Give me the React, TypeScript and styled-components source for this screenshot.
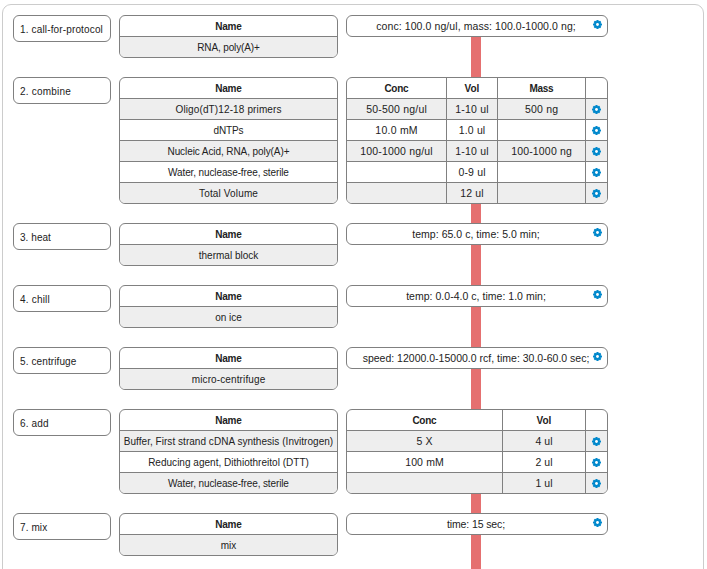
import React from "react";
import styled, { createGlobalStyle } from "styled-components";

const GlobalStyle = createGlobalStyle`
  *, *::before, *::after { box-sizing: border-box; }
  html, body { margin: 0; background: #fff; overflow: hidden; }
  body { font: 10px/20px "Liberation Sans", Arial, sans-serif; color: #222; }
`;

const Page = styled.div`
  height: 569px;
  padding: 4px 3px 0 2px;
  overflow: hidden;
`;

const Panel = styled.main`
  height: 620px;
  padding: 10px 0 0 10px;
  border: 1px solid #ccc;
  border-radius: 9px;
`;

const StepRow = styled.section`
  display: grid;
  grid-template-columns: 98px 219px 262px;
  column-gap: 8px;
  align-items: start;
`;

const Box = styled.div`
  border: 1px solid #808080;
  border-radius: 6px;
  background: #fff;
  overflow: hidden;
`;

const StepLabel = styled(Box)`
  height: 27px;
  padding: 4px 0 0 6px;
  white-space: nowrap;
`;

const NameTable = styled(Box)`
  margin-bottom: 19px;
`;

const Details = styled.div`
  display: flex;
  flex-direction: column;
  align-self: stretch;
`;

const Connector = styled.div`
  flex: 1;
  width: 10px;
  margin-left: 125px;
  background: #e57070;
`;

const Row = styled.div<{ $cols?: string }>`
  display: grid;
  grid-template-columns: ${(p) => p.$cols ?? "1fr"};
  height: 21px;
  border-bottom: 1px solid #808080;
  &:nth-child(even) { background: #eee; }
  &:first-child { font-weight: bold; }
  &:last-child { height: 20px; border-bottom: 0; }
`;

const Cell = styled.div`
  display: flex;
  justify-content: center;
  padding-top: 1px;
  line-height: 20px;
  white-space: nowrap;
  border-right: 1px solid #808080;
  &:last-child { border-right: 0; }
`;

const GearCell = styled(Cell)`
  align-items: center;
  padding-top: 0;
`;

const Summary = styled(Box)`
  display: grid;
  grid-template-columns: 1fr;
  height: 22px;
`;

const SummaryText = styled.div`
  display: flex;
  justify-content: center;
  grid-area: 1 / 1;
  padding: 1px 2px 0 0;
  white-space: nowrap;
`;

const SummaryGear = styled.div`
  display: flex;
  grid-area: 1 / 1;
  justify-self: end;
  align-self: start;
  padding: 4px 5px 0 0;
`;

const Tracked = styled.span<{ $spacing: number; $size: number }>`
  font-size: ${(p) => p.$size}px;
  letter-spacing: ${(p) => p.$spacing}px;
  margin-top: ${(p) => (p.$size > 10 ? -1 : 0)}px;
  margin-right: ${(p) => -p.$spacing}px;
`;

const GearSvg = styled.svg`
  display: block;
  width: 9px;
  height: 9px;
`;

const Gear = () => (
  <GearSvg viewBox="-4.5 -4.5 9 9" aria-hidden="true">
    {[0, 45, 90, 135].map((a) => (
      <rect key={a} x="-1.1" y="-4.5" width="2.2" height="9" rx="0.3" fill="#0088cc" transform={`rotate(${a})`} />
    ))}
    <circle r="3.4" fill="#0088cc" />
    <circle r="1.4" fill="#fff" />
  </GearSvg>
);

/* Letter spacing and, for the wider numeric texts, a font size. */
const tracking: Record<string, [number, number?]> = {
  "1. call-for-protocol": [0.147],
  "2. combine": [0.216],
  "3. heat": [0.05],
  "4. chill": [0.2],
  "5. centrifuge": [0.11],
  "6. add": [0.15],
  "7. mix": [0.1],
  "RNA, poly(A)+": [-0.137],
  "Oligo(dT)12-18 primers": [0.126],
  dNTPs: [-0.15],
  "Nucleic Acid, RNA, poly(A)+": [-0.085],
  "Water, nuclease-free, sterile": [-0.117],
  "Total Volume": [0.146],
  "micro-centrifuge": [0.12],
  "conc: 100.0 ng/ul, mass: 100.0-1000.0 ng;": [0.083, 10.5],
  "50-500 ng/ul": [0.214, 10.5],
  "10.0 mM": [0.233, 10.5],
  "100-1000 ng/ul": [0.175, 10.5],
  "1-10 ul": [0.205, 10.5],
  "1.0 ul": [0.15, 10.5],
  "0-9 ul": [0.15, 10.5],
  "12 ul": [0.15, 10.5],
  "100-1000 ng": [0.167, 10.5],
  "500 ng": [0.185, 10.5],
  "temp: 65.0 c, time: 5.0 min;": [0.029, 10.5],
  "temp: 0.0-4.0 c, time: 1.0 min;": [0.028, 10.5],
  "speed: 12000.0-15000.0 rcf, time: 30.0-60.0 sec;": [0.005, 10.5],
  "Buffer, First strand cDNA synthesis (Invitrogen)": [0.036],
  "Reducing agent, Dithiothreitol (DTT)": [0.019],
  "5 X": [0.15, 10.5],
  "100 mM": [0.15, 10.5],
  "4 ul": [0, 10.5],
  "2 ul": [0, 10.5],
  "1 ul": [0, 10.5],
  "time: 15 sec;": [-0.11, 10.5],
  Name: [-0.225],
  Conc: [-0.3],
  Mass: [-0.35],
};

const Text = ({ children }: { children: string }) => {
  const [spacing, size = 10] = tracking[children] ?? [0];
  return <Tracked $spacing={spacing} $size={size}>{children}</Tracked>;
};

type Step = {
  label: string;
  names: string[];
  summary?: string;
  cols?: string;
  head?: string[];
  rows?: string[][];
};

const steps: Step[] = [
  { label: "1. call-for-protocol", names: ["RNA, poly(A)+"], summary: "conc: 100.0 ng/ul, mass: 100.0-1000.0 ng;" },
  {
    label: "2. combine",
    names: ["Oligo(dT)12-18 primers", "dNTPs", "Nucleic Acid, RNA, poly(A)+", "Water, nuclease-free, sterile", "Total Volume"],
    cols: "100px 51px 88px 21px",
    head: ["Conc", "Vol", "Mass"],
    rows: [
      ["50-500 ng/ul", "1-10 ul", "500 ng"],
      ["10.0 mM", "1.0 ul", ""],
      ["100-1000 ng/ul", "1-10 ul", "100-1000 ng"],
      ["", "0-9 ul", ""],
      ["", "12 ul", ""],
    ],
  },
  { label: "3. heat", names: ["thermal block"], summary: "temp: 65.0 c, time: 5.0 min;" },
  { label: "4. chill", names: ["on ice"], summary: "temp: 0.0-4.0 c, time: 1.0 min;" },
  { label: "5. centrifuge", names: ["micro-centrifuge"], summary: "speed: 12000.0-15000.0 rcf, time: 30.0-60.0 sec;" },
  {
    label: "6. add",
    names: ["Buffer, First strand cDNA synthesis (Invitrogen)", "Reducing agent, Dithiothreitol (DTT)", "Water, nuclease-free, sterile"],
    cols: "156px 83px 21px",
    head: ["Conc", "Vol"],
    rows: [["5 X", "4 ul"], ["100 mM", "2 ul"], ["", "1 ul"]],
  },
  { label: "7. mix", names: ["mix"], summary: "time: 15 sec;" },
];

const StepView = ({ step }: { step: Step }) => (
  <StepRow>
    <StepLabel><Text>{step.label}</Text></StepLabel>
    <NameTable>
      {["Name", ...step.names].map((n) => (
        <Row key={n}><Cell><Text>{n}</Text></Cell></Row>
      ))}
    </NameTable>
    <Details>
      {step.summary ? (
        <Summary>
          <SummaryText><Text>{step.summary}</Text></SummaryText>
          <SummaryGear><Gear /></SummaryGear>
        </Summary>
      ) : (
        <Box>
          <Row $cols={step.cols}>
            {step.head!.map((h) => <Cell key={h}><Text>{h}</Text></Cell>)}
            <Cell />
          </Row>
          {step.rows!.map((r, i) => (
            <Row key={i} $cols={step.cols}>
              {r.map((v, j) => <Cell key={j}><Text>{v}</Text></Cell>)}
              <GearCell><Gear /></GearCell>
            </Row>
          ))}
        </Box>
      )}
      <Connector />
    </Details>
  </StepRow>
);

export default function App() {
  return (
    <Page>
      <GlobalStyle />
      <Panel>
        {steps.map((s) => <StepView key={s.label} step={s} />)}
      </Panel>
    </Page>
  );
}
